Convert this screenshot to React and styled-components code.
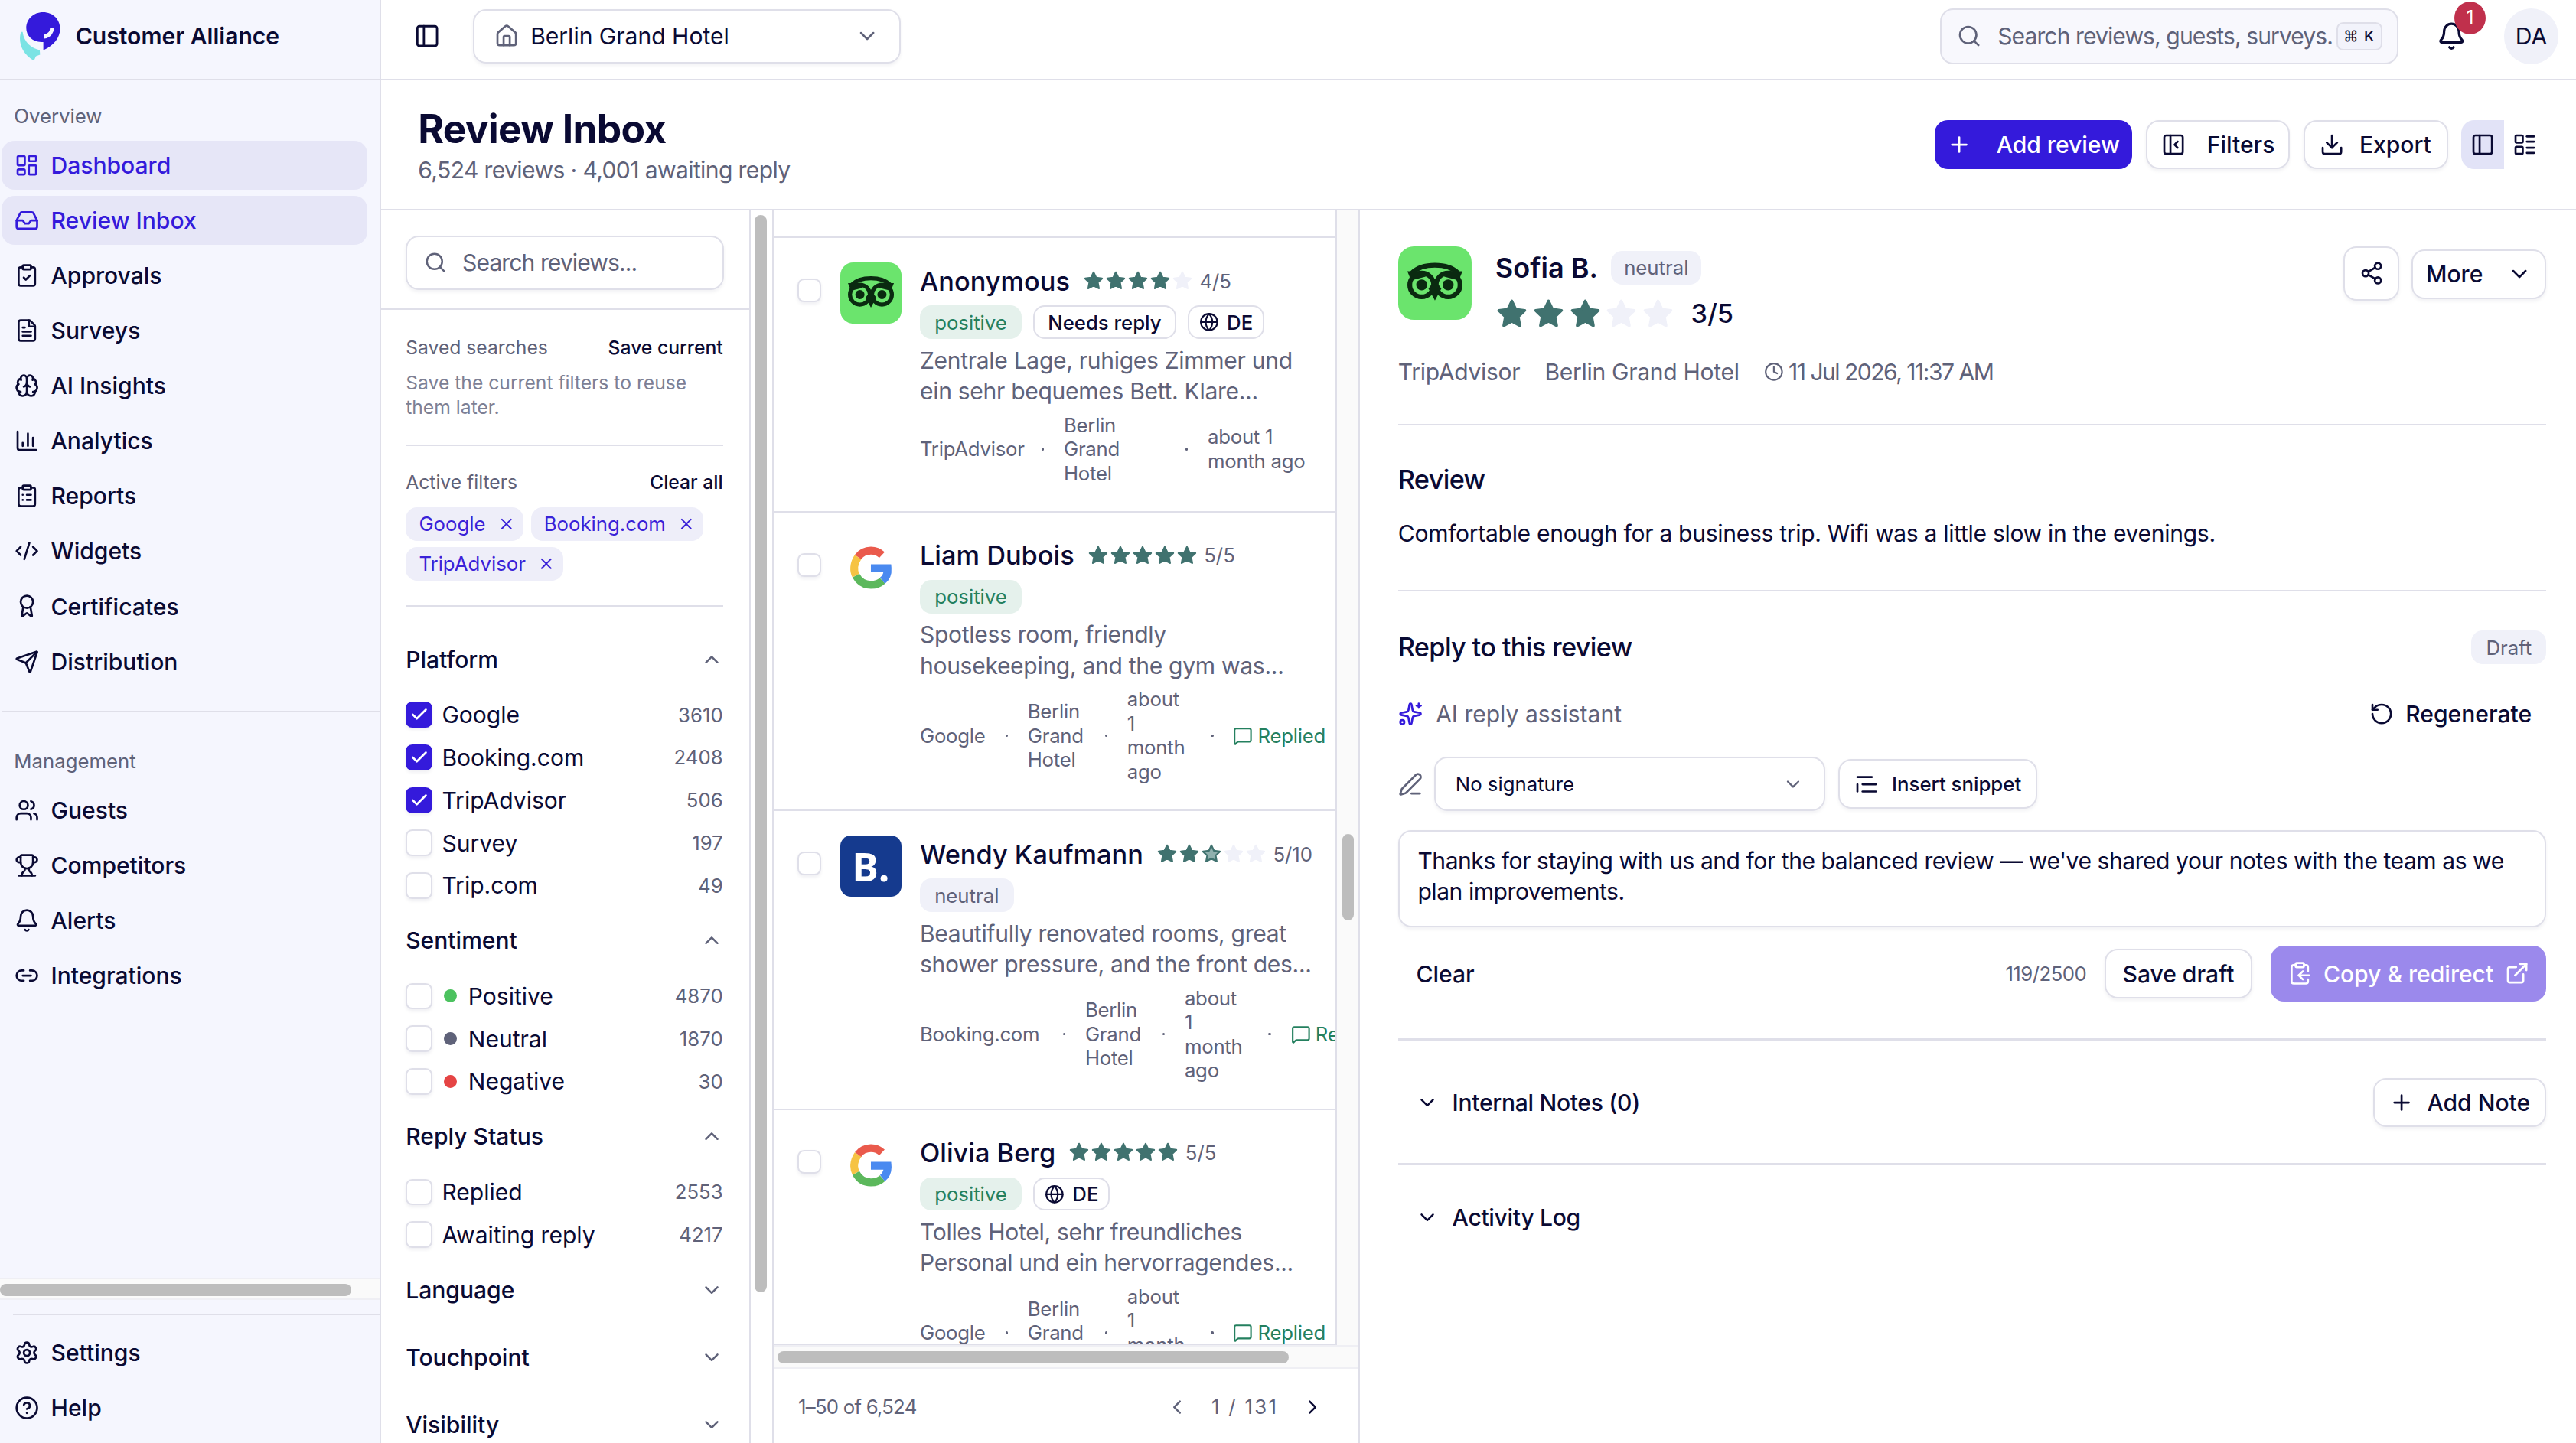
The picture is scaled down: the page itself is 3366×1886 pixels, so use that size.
import React from 'react';
import styled, { createGlobalStyle } from 'styled-components';
import {
  LayoutDashboard, Inbox, ClipboardCheck, FileText, Brain, ChartColumn, ClipboardList, CodeXml, Award, Send,
  Users, Trophy, Bell, Link2, Settings, CircleHelp, PanelLeft, House, ChevronDown, ChevronUp, ChevronLeft,
  ChevronRight, Search, X, Check, Globe, MessageSquare, Share2, Clock, Sparkles, RotateCcw, PenLine, TextQuote,
  ClipboardCopy, ExternalLink, Plus, PanelLeftClose, Download, LayoutList,
} from 'lucide-react';

const ink = '#0a0a33';
const muted = '#5f6279';
const line = '#dfdfe9';
const brand = '#341adb';

const GlobalStyle = createGlobalStyle`
  html, body { margin: 0; padding: 0; background: #fff; overflow: hidden; }
  * { box-sizing: border-box; }
`;

const Shell = styled.div`
  zoom: 2.14668;
  width: 1568px;
  height: 878.6px;
  display: flex;
  overflow: hidden;
  font-family: Inter, "Liberation Sans", sans-serif;
  font-size: 14px;
  color: ${ink};
  background: #fff;
`;

const Sidebar = styled.aside`
  flex: 0 0 232px;
  display: flex;
  flex-direction: column;
  background: #f5f6fe;
  border-right: 1px solid ${line};
`;

const Brand = styled.div`
  flex: 0 0 49px;
  display: flex;
  align-items: center;
  gap: 8px;
  padding: 0 0 4px 11px;
  border-bottom: 1px solid ${line};
  font-weight: 600;
`;

const SideNav = styled.nav`
  flex: 1;
  min-height: 0;
  padding-top: 13.5px;
`;

const NavLabel = styled.div`
  height: 17px;
  margin-bottom: 6px;
  padding-left: 8.5px;
  font-size: 12px;
  line-height: 17px;
  color: ${muted};
`;

const NavItem = styled.a`
  display: flex;
  align-items: center;
  gap: 7px;
  width: 222.5px;
  height: 30px;
  margin: 0 0 3.6px 1px;
  padding-left: 8px;
  border-radius: 8px;
  background: ${p => (p.$active ? '#e6e6f7' : 'transparent')};
  color: ${p => (p.$active ? brand : ink)};
  font-weight: 450;
  svg { width: 15px; height: 15px; flex: none; }
`;

const NavRule = styled.div`
  height: 1px;
  margin: 15px 0 21.5px 1px;
  background: ${line};
`;

const BarTrack = styled.div`
  position: relative;
  flex: 0 0 ${p => p.$h}px;
  background: #fafafa;
  border-top: 1px solid #efeff4;
  border-bottom: 1px solid #efeff4;
`;

const BarThumb = styled.div`
  position: absolute;
  border-radius: 4px;
  background: #bdbdbd;
  left: ${p => p.$x}px;
  top: ${p => p.$y}px;
  width: ${p => p.$w}px;
  height: ${p => p.$l}px;
`;

const SideFoot = styled.div`
  flex: 0 0 78.6px;
  margin-top: 8.5px;
  margin-left: 8px;
  padding-top: 7.5px;
  border-top: 1px solid ${line};
  & > a { margin-left: -7px; }
`;

const Main = styled.div`
  flex: 1;
  min-width: 0;
  display: flex;
  flex-direction: column;
`;

const TopBar = styled.header`
  flex: 0 0 49px;
  display: flex;
  align-items: center;
  padding: 0 10.5px 4px 20px;
  border-bottom: 1px solid ${line};
`;

const GhostIcon = styled.span`
  display: flex;
  width: 16px;
  margin-right: 20px;
  svg { width: 16px; height: 16px; }
`;

const HotelSelect = styled.div`
  display: flex;
  align-items: center;
  width: 260.5px;
  height: 33px;
  padding: 0 12px;
  gap: 7px;
  border: 1px solid ${line};
  border-radius: 8px;
  box-shadow: 0 1px 2px rgba(20, 20, 60, 0.05);
  svg { width: 15px; height: 15px; color: ${muted}; flex: none; }
  span { flex: 1; }
`;

const GlobalSearch = styled.div`
  display: flex;
  align-items: center;
  width: 279px;
  height: 34px;
  margin-left: auto;
  padding: 0 9px;
  gap: 10px;
  background: #f8f8fd;
  border: 1px solid ${line};
  border-radius: 8px;
  color: ${muted};
  svg { width: 15px; height: 15px; flex: none; }
`;

const Clip = styled.span`
  flex: 1;
  min-width: 0;
  overflow: hidden;
  white-space: nowrap;
  letter-spacing: -0.03em;
`;

const Kbd = styled.kbd`
  flex: none;
  width: 28px;
  height: 17px;
  margin-left: -8px;
  border: 1px solid ${line};
  border-radius: 4px;
  background: #f2f3fb;
  font: 500 9px/15px Inter, sans-serif;
  letter-spacing: 0.06em;
  text-align: center;
  color: ${ink};
`;

const BellBox = styled.div`
  position: relative;
  display: flex;
  justify-content: center;
  width: 32px;
  margin: 0 16px;
  svg { width: 18px; height: 18px; }
`;

const Badge = styled.span`
  position: absolute;
  left: 18px;
  top: -12px;
  width: 19px;
  height: 20px;
  border-radius: 50%;
  background: #c0304c;
  color: #fff;
  font-size: 11px;
  line-height: 20px;
  text-align: center;
`;

const Avatar = styled.div`
  flex: none;
  width: 33.5px;
  height: 34px;
  border-radius: 50%;
  background: #f0f1f9;
  font-size: 14px;
  line-height: 34px;
  text-align: center;
`;

const PageHead = styled.div`
  flex: 0 0 79px;
  display: flex;
  align-items: center;
  justify-content: space-between;
  padding: 0 18px 0 22.5px;
  border-bottom: 1px solid ${line};
`;

const Title = styled.h1`
  margin: 1px 0 0;
  font-size: 24px;
  line-height: 30px;
  font-weight: 700;
  letter-spacing: -0.015em;
`;

const SubTitle = styled.div`
  line-height: 20px;
  color: ${muted};
  letter-spacing: -0.02em;
`;

const HeadActions = styled.div`
  display: flex;
  align-items: center;
  gap: 8px;
`;

const Button = styled.button`
  display: inline-flex;
  align-items: center;
  justify-content: center;
  gap: ${p => p.$gap || 8}px;
  width: ${p => p.$w}px;
  height: ${p => p.$h || 30}px;
  padding: 0;
  flex: none;
  border: 1px solid ${line};
  border-radius: 8px;
  background: #fff;
  color: ${ink};
  font: 500 14px Inter, sans-serif;
  box-shadow: 0 1px 2px rgba(20, 20, 60, 0.05);
  svg { width: 15px; height: 15px; flex: none; }
`;

const PrimaryButton = styled(Button)`
  background: ${p => (p.$soft ? '#9b89ec' : brand)};
  border-color: transparent;
  color: #fff;
  box-shadow: none;
`;

const MoreButton = styled(Button)`
  margin-top: 2px;
`;

const ViewToggle = styled.div`
  display: flex;
  height: 30px;
`;

const ViewOption = styled.span`
  display: flex;
  align-items: center;
  justify-content: center;
  width: 26px;
  border-radius: 8px 0 0 8px;
  background: ${p => (p.$on ? '#e2e3f7' : 'transparent')};
  svg { width: 15px; height: 15px; }
`;

const Panels = styled.div`
  flex: 1;
  min-height: 0;
  display: flex;
`;

const FilterPanel = styled.section`
  flex: 0 0 225px;
  border-right: 1px solid ${line};
  overflow: hidden;
`;

const FilterSearch = styled.div`
  height: 60.5px;
  padding: 15.5px 15px 0;
  border-bottom: 1px solid ${line};
`;

const SearchBox = styled.div`
  display: flex;
  align-items: center;
  gap: 9.5px;
  width: 193.5px;
  height: 33px;
  padding: 0 10px;
  border: 1px solid ${line};
  border-radius: 8px;
  box-shadow: 0 1px 2px rgba(20, 20, 60, 0.05);
  color: ${muted};
  letter-spacing: -0.03em;
  svg { width: 14px; height: 14px; }
`;

const FilterBody = styled.div`
  padding: 15px 16px 0 15px;
`;

const MiniHead = styled.div`
  display: flex;
  justify-content: space-between;
  height: 16px;
  font-size: 11.5px;
  line-height: 16px;
  color: ${muted};
  b { font-weight: 500; color: ${ink}; }
`;

const Hint = styled.p`
  margin: 6px 0 0;
  font-size: 11.5px;
  line-height: 15px;
  color: #7d8095;
`;

const Rule = styled.div`
  height: 1px;
  background: ${line};
  margin: ${p => p.$top}px 0 ${p => p.$bottom}px;
`;

const Chips = styled.div`
  display: flex;
  flex-wrap: wrap;
  gap: 4px 4.5px;
  margin-top: 7.5px;
`;

const Chip = styled.span`
  display: inline-flex;
  align-items: center;
  gap: 7px;
  height: 20.2px;
  padding: 0 5px 0 8px;
  border-radius: 7px;
  background: #eeeef9;
  color: #3a22d8;
  font-size: 12px;
  svg { width: 11px; height: 11px; }
`;

const GroupHead = styled.div`
  display: flex;
  align-items: center;
  justify-content: space-between;
  height: 20px;
  margin-bottom: ${p => (p.$open ? 10.8 : 21)}px;
  font-weight: 500;
  svg { width: 14px; height: 14px; color: ${muted}; }
`;

const GroupRows = styled.div`
  margin-bottom: 10.5px;
`;

const FilterRow = styled.label`
  display: flex;
  align-items: center;
  height: 26px;
  gap: 6px;
  em { margin-left: auto; font-style: normal; font-size: 12px; color: ${muted}; }
`;

const Tick = styled.span`
  flex: none;
  display: flex;
  align-items: center;
  justify-content: center;
  width: ${p => p.$size || 16}px;
  height: ${p => p.$size || 16}px;
  border-radius: 4px;
  border: 1px solid ${p => (p.$on ? brand : line)};
  background: ${p => (p.$on ? brand : '#fff')};
  box-shadow: 0 1px 2px rgba(20, 20, 60, 0.06);
  color: #fff;
  svg { width: 12px; height: 12px; }
`;

const Dot = styled.i`
  flex: none;
  width: 8px;
  height: 8px;
  margin: 0 1px;
  border-radius: 50%;
  background: ${p => p.$c};
`;

const Gutter = styled.div`
  position: relative;
  flex: 0 0 13px;
`;

const ListCol = styled.section`
  flex: 0 0 358px;
  display: flex;
  flex-direction: column;
  border-left: 1px solid ${line};
  border-right: 1px solid ${line};
  background: #fafafa;
`;

const ListArea = styled.div`
  flex: 1;
  min-height: 0;
  display: flex;
`;

const ListView = styled.div`
  flex: 0 0 343px;
  background: #fff;
  border-right: 1px solid ${line};
  border-bottom: 1px solid ${line};
  overflow: hidden;
`;

const Peek = styled.div`
  height: 17px;
  border-bottom: 1px solid ${line};
`;

const ReviewRow = styled.article`
  display: flex;
  width: 360px;
  padding: 15px 0 15.7px 14.5px;
  border-bottom: 1px solid ${line};
`;

const RowCheck = styled.div`
  flex: 0 0 26px;
  padding-top: 9.5px;
`;

const LogoCell = styled.div`
  flex: 0 0 37.3px;
  height: 37.3px;
  margin-right: 11.2px;
  display: flex;
  align-items: center;
  justify-content: center;
`;

const RowBody = styled.div`
  flex: 1;
  min-width: 0;
`;

const NameLine = styled.div`
  display: flex;
  align-items: center;
  height: 22px;
  gap: 8px;
  font-size: 16px;
  font-weight: 500;
  white-space: nowrap;
`;

const Score = styled.span`
  margin-left: -4px;
  font-size: 12px;
  font-weight: 400;
  color: ${muted};
`;

const StarRow = styled.span`
  display: inline-flex;
  gap: ${p => p.$gap || 0.5}px;
`;

const Tags = styled.div`
  display: flex;
  gap: 7px;
  margin-top: 4px;
`;

const Tag = styled.span`
  display: inline-flex;
  align-items: center;
  gap: 5px;
  height: 20.4px;
  padding: 0 ${p => p.$pad || 8}px;
  border-radius: 7px;
  border: 1px solid ${p => (p.$tone === 'outline' ? line : 'transparent')};
  background: ${p => ({ positive: '#e5f1ec', neutral: '#f0f1f9', outline: '#fff' }[p.$tone])};
  color: ${p => ({ positive: '#24805f', neutral: muted, outline: ink }[p.$tone])};
  font-size: 12px;
  font-weight: ${p => (p.$tone === 'outline' ? 500 : 400)};
  svg { width: 12px; height: 12px; }
`;

const Snippet = styled.p`
  margin: 3.6px 0 4px;
  width: 240px;
  line-height: 18.7px;
  color: ${muted};
  white-space: nowrap;
  letter-spacing: -0.01em;
`;

const MetaLine = styled.div`
  display: flex;
  align-items: center;
  gap: 12px;
  font-size: 12px;
  line-height: 14.7px;
  color: ${muted};
  white-space: nowrap;
  letter-spacing: -0.01em;
`;

const MetaCell = styled.span`
  flex: 0 0 ${p => p.$w}px;
  min-width: 0;
`;

const MetaDot = styled.i`
  flex: 0 0 1.6px;
  height: 1.6px;
  border-radius: 50%;
  background: ${muted};
`;

const Replied = styled.span`
  display: inline-flex;
  align-items: center;
  gap: 3px;
  color: #24805f;
  svg { width: 12px; height: 12px; }
`;

const ListFoot = styled.div`
  flex: 0 0 45px;
  display: flex;
  align-items: center;
  padding: 1px 21px 0 15px;
  background: #fff;
  font-size: 12px;
  letter-spacing: -0.03em;
  color: ${muted};
  svg { width: 14px; height: 14px; }
`;

const Pager = styled.span`
  margin-left: auto;
  display: flex;
  align-items: center;
  gap: 14px;
  letter-spacing: 0.09em;
  svg:last-child { color: ${ink}; }
`;

const Detail = styled.section`
  flex: 1;
  min-width: 0;
  padding: 22px 18px 0 23px;
`;

const DetailHead = styled.div`
  display: flex;
  height: 45px;
`;

const DetailLogo = styled.span`
  display: flex;
  margin-right: 14.5px;
`;

const DetailName = styled.div`
  display: flex;
  align-items: center;
  gap: 8px;
  height: ${p => p.$h}px;
  margin-top: ${p => p.$mt || 0}px;
  font-size: 16.8px;
  font-weight: 600;
`;

const ScoreBig = styled.span`
  margin-left: 2px;
  font-size: 16px;
  font-weight: 500;
`;

const HeadButtons = styled.div`
  margin-left: auto;
  display: flex;
  align-items: flex-start;
  gap: 7.5px;
`;

const DetailMeta = styled.div`
  display: flex;
  align-items: center;
  height: 19px;
  margin-top: 22px;
  gap: 15px;
  color: ${muted};
  letter-spacing: -0.01em;
  span { display: inline-flex; align-items: center; gap: 3px; letter-spacing: -0.05em; }
  svg { width: 12px; height: 12px; }
`;

const Heading = styled.h2`
  margin: 0;
  height: 20px;
  font-size: 16px;
  line-height: 20px;
  font-weight: 500;
  letter-spacing: -0.02em;
`;

const Body = styled.p`
  margin: 13px 0 0;
  line-height: 19px;
  letter-spacing: -0.01em;
`;

const SpacedRow = styled.div`
  display: flex;
  align-items: center;
  justify-content: space-between;
  margin-top: ${p => p.$mt || 0}px;
  min-height: 20px;
`;

const AiLabel = styled.span`
  display: flex;
  align-items: center;
  gap: 8px;
  color: ${muted};
  svg { width: 15px; height: 15px; color: ${brand}; }
`;

const Regenerate = styled.span`
  display: flex;
  align-items: center;
  gap: 7px;
  margin-right: 9px;
  font-weight: 500;
  svg { width: 15px; height: 15px; }
`;

const SignatureRow = styled.div`
  display: flex;
  align-items: center;
  height: 33px;
  margin-top: 16px;
  gap: 8px;
  & > svg { width: 15px; height: 15px; color: ${muted}; flex: none; margin-right: -1px; }
`;

const SignatureSelect = styled.div`
  display: flex;
  align-items: center;
  justify-content: space-between;
  width: 238px;
  height: 33px;
  padding: 0 12px;
  border: 1px solid ${line};
  border-radius: 8px;
  font-size: 12px;
  box-shadow: 0 1px 2px rgba(20, 20, 60, 0.05);
  svg { width: 13px; height: 13px; color: ${muted}; }
`;

const SmallButton = styled(Button)`
  font-size: 12px;
`;

const ReplyBox = styled.div`
  height: 59.5px;
  margin-top: 11.5px;
  padding: 8.5px 11px;
  border: 1px solid ${line};
  border-radius: 8px;
  line-height: 18.7px;
  letter-spacing: -0.015em;
  box-shadow: 0 1px 2px rgba(20, 20, 60, 0.05);
`;

const ActionRow = styled.div`
  display: flex;
  align-items: center;
  height: 34px;
  margin-top: 11px;
  padding-left: 11px;
  font-weight: 500;
  gap: 11px;
`;

const Counter = styled.span`
  margin-left: auto;
  font-size: 12px;
  font-weight: 400;
  letter-spacing: -0.02em;
  color: ${muted};
`;

const Collapsible = styled.span`
  display: flex;
  align-items: center;
  gap: 8px;
  padding-left: 11px;
  font-weight: 500;
  letter-spacing: -0.01em;
  svg { width: 14px; height: 14px; }
`;

const BookingTile = styled.span`
  display: flex;
  align-items: center;
  justify-content: center;
  width: 37.3px;
  height: 37.3px;
  border-radius: 6.5px;
  background: #153a8e;
  color: #fff;
  font: 700 24px/1 "Open Sans", sans-serif;
`;

const Stars = ({ value, size = 13, gap }) => (
  <StarRow $gap={gap}>
    {[0, 1, 2, 3, 4].map(i => {
      const half = value > i && value < i + 1;
      const on = value >= i + 1;
      return (
        <svg key={i} width={size} height={size} viewBox="0 0 24 24" strokeLinejoin="round" strokeWidth="2"
          fill={on ? '#40726f' : half ? '#8fb0ae' : '#f0f1f9'} stroke={on || half ? '#40726f' : '#f0f1f9'}>
          <path d="M12 2.5l2.9 6 6.6.9-4.8 4.6 1.2 6.5-5.9-3.2-5.9 3.2 1.2-6.5L2.5 9.4l6.6-.9z" />
        </svg>
      );
    })}
  </StarRow>
);

const BrandMark = () => (
  <svg width="27" height="30" viewBox="0 0 27 30">
    <path d="M1.6 12.5C-.2 18 1.6 25.5 9.5 30l1.2-2.8 2.5-.9-.2-2.8C8 22.5 3.5 19 2.6 12.5z" fill="#7be3e4" />
    <path d="M15 .5c6.2 0 10.4 4.5 10.4 10 0 5.6-4 10.3-9.6 12.8l-.6.3v-5H14C8.5 18.6 4.8 14.6 4.8 10.1 4.8 4.8 9.2.5 15 .5z" fill={brand} />
    <path d="M20.5 9.8c0 2.5-1.5 5-4.9 5.6" fill="none" stroke="#f5f6fe" strokeWidth="2.4" />
  </svg>
);

const TripLogo = ({ size }) => (
  <svg width={size} height={size} viewBox="0 0 40 40">
    <rect width="40" height="40" rx="8.5" fill="#6be46d" />
    <g fill="none" stroke="#0a2a10">
      <circle cx="12.8" cy="21" r="6.5" strokeWidth="2.6" />
      <circle cx="27.2" cy="21" r="6.5" strokeWidth="2.6" />
      <path d="M7.5 14.5C11 11 15.5 10.3 20 10.3s9 .7 12.5 4.2" strokeWidth="2.6" />
    </g>
    <circle cx="12.8" cy="21" r="3" fill="#0a2a10" />
    <circle cx="27.2" cy="21" r="3" fill="#0a2a10" />
    <path d="M5 13.5h7l3 3-8 2zM35 13.5h-7l-3 3 8 2zM16.5 23l3.5 6.5 3.5-6.5-3.5-5z" fill="#0a2a10" />
  </svg>
);

const GoogleLogo = () => (
  <svg width="27" height="27" viewBox="0 0 48 48" fill="none" strokeWidth="8.5">
    <path d="M10 12.5C13.5 7.8 18.5 5.5 24 5.5c4.8 0 8.8 1.7 12 4.7" stroke="#ea5a4c" />
    <path d="M7.8 32.5C5.2 27.5 5 20 10 12.5" stroke="#f6c344" />
    <path d="M36.5 38c-3 2.8-7.5 4.5-12.5 4.5-7.5 0-13-4-16.2-10" stroke="#5cb85c" />
    <path d="M24 24.5h18c.4 4.8-1 10-5.5 13.5" stroke="#4a8af0" />
  </svg>
);

const mainNav = [
  [LayoutDashboard, 'Dashboard', true], [Inbox, 'Review Inbox', true], [ClipboardCheck, 'Approvals'],
  [FileText, 'Surveys'], [Brain, 'AI Insights'], [ChartColumn, 'Analytics'], [ClipboardList, 'Reports'],
  [CodeXml, 'Widgets'], [Award, 'Certificates'], [Send, 'Distribution'],
];
const manageNav = [[Users, 'Guests'], [Trophy, 'Competitors'], [Bell, 'Alerts'], [Link2, 'Integrations']];

const SideLink = ({ item }) => {
  const [Glyph, label, active] = item;
  return <NavItem $active={active}><Glyph />{label}</NavItem>;
};

const FilterOption = ({ label, count, on, dot }) => (
  <FilterRow>
    <Tick $on={on}>{on && <Check strokeWidth={2.5} />}</Tick>
    {dot && <Dot $c={dot} />}
    <span>{label}</span>
    <em>{count}</em>
  </FilterRow>
);

const Group = ({ title, open, children }) => (
  <div>
    <GroupHead $open={open}>
      {title}
      {open ? <ChevronUp /> : <ChevronDown />}
    </GroupHead>
    {open && <GroupRows>{children}</GroupRows>}
  </div>
);

const reviews = [
  {
    name: 'Anonymous', stars: 4, score: '4/5', logo: <TripLogo size={37.3} />,
    tags: [['positive', 'positive'], ['outline', 'Needs reply'], ['outline', 'DE', true]],
    text: ['Zentrale Lage, ruhiges Zimmer und', 'ein sehr bequemes Bett. Klare...'],
    meta: [[62, ['TripAdvisor']], [62, ['Berlin', 'Grand', 'Hotel']], [64, ['about 1', 'month ago']]],
  },
  {
    name: 'Liam Dubois', stars: 5, score: '5/5', logo: <GoogleLogo />,
    tags: [['positive', 'positive']],
    text: ['Spotless room, friendly', 'housekeeping, and the gym was...'],
    meta: [[40, ['Google']], [35, ['Berlin', 'Grand', 'Hotel']], [39, ['about', '1', 'month', 'ago']]],
    replied: true,
  },
  {
    name: 'Wendy Kaufmann', stars: 2.5, score: '5/10', logo: <BookingTile>B.</BookingTile>,
    tags: [['neutral', 'neutral']],
    text: ['Beautifully renovated rooms, great', 'shower pressure, and the front des...'],
    meta: [[75, ['Booking.com']], [35, ['Berlin', 'Grand', 'Hotel']], [39, ['about', '1', 'month', 'ago']]],
    replied: true,
  },
  {
    name: 'Olivia Berg', stars: 5, score: '5/5', logo: <GoogleLogo />,
    tags: [['positive', 'positive'], ['outline', 'DE', true]],
    text: ['Tolles Hotel, sehr freundliches', 'Personal und ein hervorragendes...'],
    meta: [[40, ['Google']], [35, ['Berlin', 'Grand', 'Hotel']], [39, ['about', '1', 'month', 'ago']]],
    replied: true,
  },
];

const Row = ({ review }) => (
  <ReviewRow>
    <RowCheck><Tick $size={14.5} /></RowCheck>
    <LogoCell>{review.logo}</LogoCell>
    <RowBody>
      <NameLine>
        {review.name}
        <Stars value={review.stars} />
        <Score>{review.score}</Score>
      </NameLine>
      <Tags>
        {review.tags.map(([tone, label, globe]) => (
          <Tag key={label} $tone={tone} $pad={globe ? 6 : 8}>{globe && <Globe />}{label}</Tag>
        ))}
      </Tags>
      <Snippet>{review.text[0]}<br />{review.text[1]}</Snippet>
      <MetaLine>
        {review.meta.map(([w, lines], i) => (
          <React.Fragment key={i}>
            {i > 0 && <MetaDot />}
            <MetaCell $w={w}>
              {lines.map((l, j) => <React.Fragment key={j}>{j > 0 && <br />}{l}</React.Fragment>)}
            </MetaCell>
          </React.Fragment>
        ))}
        {review.replied && <MetaDot />}
        {review.replied && <Replied><MessageSquare />Replied</Replied>}
      </MetaLine>
    </RowBody>
  </ReviewRow>
);

export default function App() {
  return (
    <Shell>
      <GlobalStyle />
      <Sidebar>
        <Brand><BrandMark />Customer Alliance</Brand>
        <SideNav>
          <NavLabel>Overview</NavLabel>
          {mainNav.map(item => <SideLink key={item[1]} item={item} />)}
          <NavRule />
          <NavLabel>Management</NavLabel>
          {manageNav.map(item => <SideLink key={item[1]} item={item} />)}
        </SideNav>
        <BarTrack $h={13.5}><BarThumb $x={0} $y={2.5} $w={214} $l={7.5} /></BarTrack>
        <SideFoot>
          <SideLink item={[Settings, 'Settings']} />
          <SideLink item={[CircleHelp, 'Help']} />
        </SideFoot>
      </Sidebar>

      <Main>
        <TopBar>
          <GhostIcon><PanelLeft /></GhostIcon>
          <HotelSelect><House /><span>Berlin Grand Hotel</span><ChevronDown /></HotelSelect>
          <GlobalSearch>
            <Search />
            <Clip>Search reviews, guests, surveys...</Clip>
            <Kbd>⌘ K</Kbd>
          </GlobalSearch>
          <BellBox><Bell /><Badge>1</Badge></BellBox>
          <Avatar>DA</Avatar>
        </TopBar>

        <PageHead>
          <div>
            <Title>Review Inbox</Title>
            <SubTitle>6,524 reviews · 4,001 awaiting reply</SubTitle>
          </div>
          <HeadActions>
            <PrimaryButton $w={120.5} $gap={15}><Plus />Add review</PrimaryButton>
            <Button $w={88} $gap={13}><PanelLeftClose />Filters</Button>
            <Button $w={88} $gap={9}><Download />Export</Button>
            <ViewToggle>
              <ViewOption $on><PanelLeft /></ViewOption>
              <ViewOption><LayoutList /></ViewOption>
            </ViewToggle>
          </HeadActions>
        </PageHead>

        <Panels>
          <FilterPanel>
            <FilterSearch>
              <SearchBox><Search /><span>Search reviews...</span></SearchBox>
            </FilterSearch>
            <FilterBody>
              <MiniHead>Saved searches<b>Save current</b></MiniHead>
              <Hint>Save the current filters to reuse<br />them later.</Hint>
              <Rule $top={15} $bottom={14} />
              <MiniHead>Active filters<b>Clear all</b></MiniHead>
              <Chips>
                <Chip>Google<X /></Chip>
                <Chip>Booking.com<X /></Chip>
                <Chip>TripAdvisor<X /></Chip>
              </Chips>
              <Rule $top={15} $bottom={22} />
              <Group title="Platform" open>
                <FilterOption on label="Google" count="3610" />
                <FilterOption on label="Booking.com" count="2408" />
                <FilterOption on label="TripAdvisor" count="506" />
                <FilterOption label="Survey" count="197" />
                <FilterOption label="Trip.com" count="49" />
              </Group>
              <Group title="Sentiment" open>
                <FilterOption dot="#4cc25f" label="Positive" count="4870" />
                <FilterOption dot="#5f6279" label="Neutral" count="1870" />
                <FilterOption dot="#e54444" label="Negative" count="30" />
              </Group>
              <Group title="Reply Status" open>
                <FilterOption label="Replied" count="2553" />
                <FilterOption label="Awaiting reply" count="4217" />
              </Group>
              <Group title="Language" />
              <Group title="Touchpoint" />
              <Group title="Visibility" />
            </FilterBody>
          </FilterPanel>
          <Gutter><BarThumb $x={2.5} $y={3} $w={7.5} $l={656} /></Gutter>

          <ListCol>
            <ListArea>
              <ListView>
                <Peek />
                {reviews.map(r => <Row key={r.name} review={r} />)}
              </ListView>
              <Gutter><BarThumb $x={3} $y={380} $w={7} $l={52.5} /></Gutter>
            </ListArea>
            <BarTrack $h={14.5}><BarThumb $x={2.5} $y={2.5} $w={311} $l={7.5} /></BarTrack>
            <ListFoot>
              1–50 of 6,524
              <Pager><ChevronLeft />1 / 131<ChevronRight /></Pager>
            </ListFoot>
          </ListCol>

          <Detail>
            <DetailHead>
              <DetailLogo><TripLogo size={44.7} /></DetailLogo>
              <div>
                <DetailName $h={26}>Sofia B.<Tag $tone="neutral" $pad={7}>neutral</Tag></DetailName>
                <DetailName $h={26} $mt={2}>
                  <Stars value={3} size={20} gap={2.3} />
                  <ScoreBig>3/5</ScoreBig>
                </DetailName>
              </div>
              <HeadButtons>
                <Button $w={34} $h={33}><Share2 /></Button>
                <MoreButton $w={82} $gap={15}>More<ChevronDown /></MoreButton>
              </HeadButtons>
            </DetailHead>
            <DetailMeta>
              TripAdvisor
              <div>Berlin Grand Hotel</div>
              <span><Clock />11 Jul 2026, 11:37 AM</span>
            </DetailMeta>
            <Rule $top={22} $bottom={23.5} />
            <Heading>Review</Heading>
            <Body>Comfortable enough for a business trip. Wifi was a little slow in the evenings.</Body>
            <Rule $top={24.5} $bottom={24} />
            <SpacedRow>
              <Heading>Reply to this review</Heading>
              <Tag $tone="neutral">Draft</Tag>
            </SpacedRow>
            <SpacedRow $mt={20.5}>
              <AiLabel><Sparkles />AI reply assistant</AiLabel>
              <Regenerate><RotateCcw />Regenerate</Regenerate>
            </SpacedRow>
            <SignatureRow>
              <PenLine />
              <SignatureSelect>No signature<ChevronDown /></SignatureSelect>
              <SmallButton $w={121} $gap={8}><TextQuote />Insert snippet</SmallButton>
            </SignatureRow>
            <ReplyBox>
              Thanks for staying with us and for the balanced review — we've shared your notes with the team as we plan improvements.
            </ReplyBox>
            <ActionRow>
              Clear
              <Counter>119/2500</Counter>
              <Button $w={90}>Save draft</Button>
              <PrimaryButton $soft $w={168} $h={34} $gap={7}><ClipboardCopy />Copy &amp; redirect<ExternalLink /></PrimaryButton>
            </ActionRow>
            <Rule $top={22.5} $bottom={23} />
            <SpacedRow>
              <Collapsible><ChevronDown />Internal Notes (0)</Collapsible>
              <Button $w={105.5} $gap={8}><Plus />Add Note</Button>
            </SpacedRow>
            <Rule $top={22} $bottom={22} />
            <SpacedRow>
              <Collapsible><ChevronDown />Activity Log</Collapsible>
            </SpacedRow>
          </Detail>
        </Panels>
      </Main>
    </Shell>
  );
}
